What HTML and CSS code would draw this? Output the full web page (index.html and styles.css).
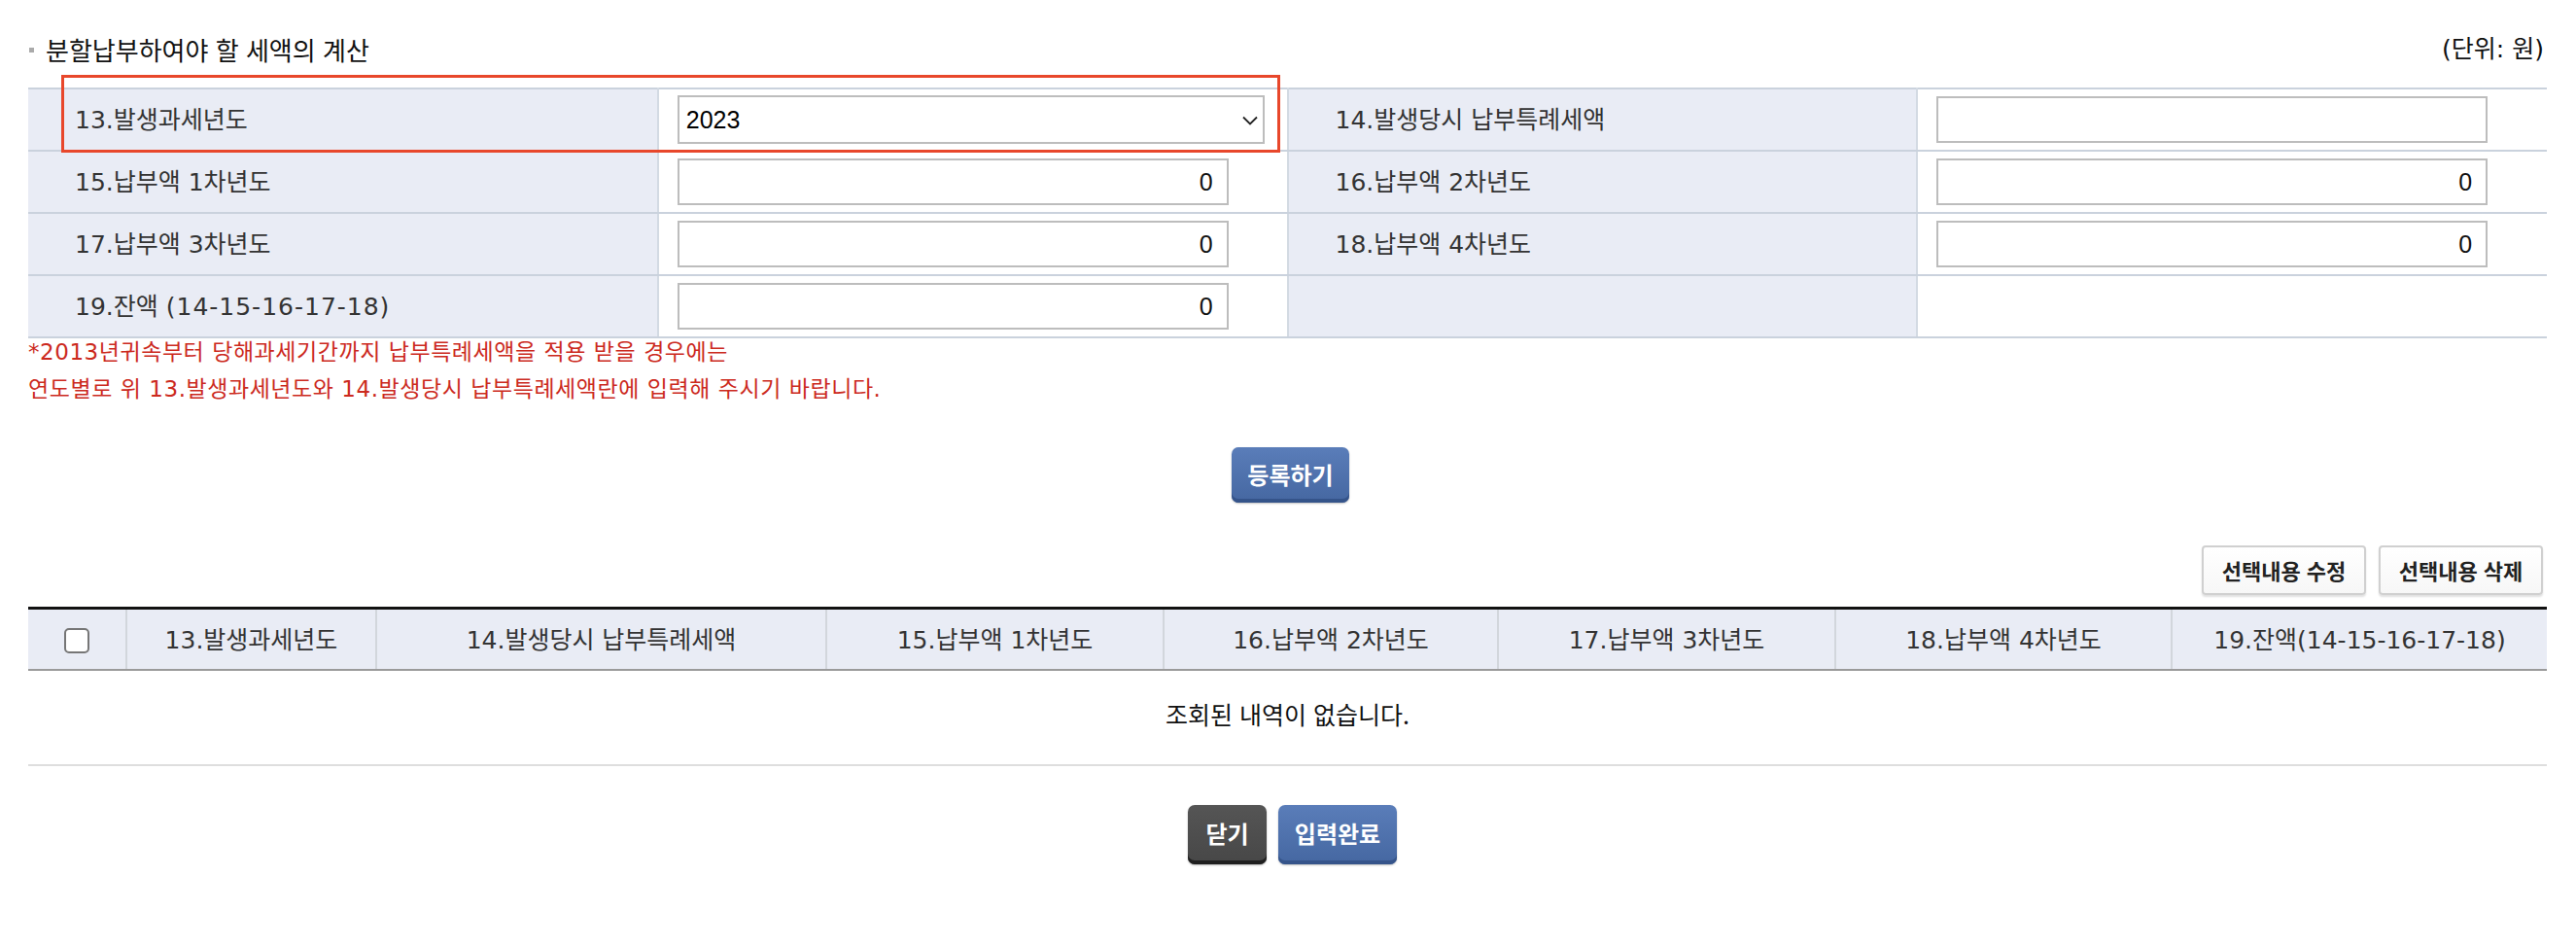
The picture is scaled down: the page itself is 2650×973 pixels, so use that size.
FILE: index.html
```html
<!DOCTYPE html>
<html lang="ko">
<head>
<meta charset="utf-8">
<title>분할납부하여야 할 세액의 계산</title>
<link rel="stylesheet" href="styles.css">
</head>
<body>
<div class="page">
  <div class="head">
    <h2 class="title"><span class="bullet"></span>분할납부하여야 할 세액의 계산</h2>
    <span class="unit">(단위: 원)</span>
  </div>

  <div class="calc">
    <div class="highlight"></div>
    <table class="form">
      <colgroup>
        <col class="c-label"><col class="c-field"><col class="c-label"><col class="c-field">
      </colgroup>
      <tr>
        <th>13.발생과세년도</th>
        <td>
          <div class="sel">
            <select><option>2023</option></select>
            <svg class="chev" width="16" height="10" viewBox="0 0 16 10"><path d="M1 1.5 L8 8.5 L15 1.5" fill="none" stroke="#222" stroke-width="1.8"/></svg>
          </div>
        </td>
        <th>14.발생당시 납부특례세액</th>
        <td><input class="inp" type="text" value=""></td>
      </tr>
      <tr>
        <th>15.납부액 1차년도</th>
        <td><input class="inp" type="text" value="0"></td>
        <th>16.납부액 2차년도</th>
        <td><input class="inp" type="text" value="0"></td>
      </tr>
      <tr>
        <th>17.납부액 3차년도</th>
        <td><input class="inp" type="text" value="0"></td>
        <th>18.납부액 4차년도</th>
        <td><input class="inp" type="text" value="0"></td>
      </tr>
      <tr>
        <th>19.잔액 <span class="nums">(14-15-16-17-18)</span></th>
        <td><input class="inp" type="text" value="0"></td>
        <th></th>
        <td></td>
      </tr>
    </table>
  </div>

  <div class="notes">
    <p>*2013년귀속부터 당해과세기간까지 납부특례세액을 적용 받을 경우에는</p>
    <p>연도별로 위 13.발생과세년도와 14.발생당시 납부특례세액란에 입력해 주시기 바랍니다.</p>
  </div>

  <div class="center reg">
    <button class="btn blue">등록하기</button>
  </div>

  <div class="tools">
    <button class="tbtn">선택내용 수정</button>
    <button class="tbtn">선택내용 삭제</button>
  </div>

  <table class="grid">
    <colgroup>
      <col class="g0"><col class="g1"><col class="g2"><col class="g3"><col class="g4"><col class="g5"><col class="g6"><col class="g7">
    </colgroup>
    <thead>
      <tr>
        <th><input class="chk" type="checkbox"></th>
        <th>13.발생과세년도</th>
        <th>14.발생당시 납부특례세액</th>
        <th>15.납부액 1차년도</th>
        <th>16.납부액 2차년도</th>
        <th>17.납부액 3차년도</th>
        <th>18.납부액 4차년도</th>
        <th>19.잔액(14-15-16-17-18)</th>
      </tr>
    </thead>
    <tbody>
      <tr><td colspan="8" class="empty">조회된 내역이 없습니다.</td></tr>
    </tbody>
  </table>

  <div class="center bottom">
    <button class="btn dark">닫기</button>
    <button class="btn blue tall">입력완료</button>
  </div>
</div>
</body>
</html>
```

FILE: styles.css
```css
* { box-sizing: border-box; }
html, body { margin: 0; padding: 0; background: #fff; }
body {
  font-family: "Noto Sans CJK KR", "Noto Sans", "Liberation Sans", sans-serif;
  color: #222;
}
.page { padding: 0 30px 40px 29px; }

.head {
  display: flex;
  justify-content: space-between;
  align-items: center;
  padding-top: 34px;
  height: 68px;
  margin-bottom: 22px;
}
.title {
  margin: 0;
  font-size: 26px;
  font-weight: normal;
  line-height: 34px;
  display: flex;
  align-items: center;
  color: #111;
}
.bullet {
  display: inline-block;
  width: 5px;
  height: 5px;
  background: #aaa;
  margin: 0 12px 0 1px;
}
.unit {
  font-family: "DejaVu Sans", "Noto Sans CJK KR", sans-serif;
  font-size: 25px;
  line-height: 34px;
  color: #111;
  margin-right: 3px;
}

.calc { position: relative; }
.highlight {
  position: absolute;
  top: -13px;
  left: 34px;
  width: 1254px;
  height: 80px;
  border: 3px solid #e8472b;
  pointer-events: none;
  z-index: 2;
}
.form {
  width: 100%;
  border-collapse: collapse;
  table-layout: fixed;
  border-top: 2px solid #cad2dd;
}
.form col.c-label, .form col.c-field { width: 25%; }
.form th, .form td {
  height: 64px;
  padding: 0;
  border-bottom: 2px solid #cad2dd;
  border-left: 2px solid #d3dae3;
  vertical-align: middle;
}
.form tr > :first-child { border-left: none; }
.form th {
  background: #e9ecf5;
  font-family: "DejaVu Sans", "Noto Sans CJK KR", sans-serif;
  font-weight: normal;
  text-align: left;
  padding: 0 0 4px 48px;
  font-size: 25px;
  color: #333;
}
.form th .nums { letter-spacing: 1px; }
.form td { padding-left: 19px; background: #fff; }

.inp {
  display: block;
  width: 567px;
  height: 48px;
  border: 2px solid #bdbdbd;
  background: #fff;
  font-family: "Liberation Sans", "Noto Sans CJK KR", sans-serif;
  font-size: 25px;
  text-align: right;
  padding: 0 14px 0 8px;
  color: #111;
  outline: none;
}
.sel { position: relative; width: 604px; height: 50px; }
.sel select {
  appearance: none;
  -webkit-appearance: none;
  width: 100%;
  height: 100%;
  border: 2px solid #bdbdbd;
  background: #fff;
  font-family: "Liberation Sans", "Noto Sans CJK KR", sans-serif;
  font-size: 25px;
  color: #000;
  padding: 0 40px 0 7px;
  border-radius: 0;
  outline: none;
}
.sel .chev { position: absolute; right: 7px; top: 21px; pointer-events: none; }

.notes {
  color: #cc2a1e;
  font-family: "DejaVu Sans", "Noto Sans CJK KR", sans-serif;
  font-size: 23px;
  letter-spacing: 0.55px;
}
.notes p { margin: 0 0 10px; line-height: 28px; }
.notes p:last-child { margin-bottom: 0; }

.center { display: flex; justify-content: center; gap: 12px; }
.reg { margin-top: 46px; padding-left: 6px; }
.btn {
  height: 57px;
  border: none;
  border-radius: 7px;
  color: #fff;
  font-family: "Noto Sans CJK KR", sans-serif;
  font-weight: bold;
  font-size: 24px;
  padding: 0 12px 3px;
  cursor: pointer;
}
.btn.blue {
  background: linear-gradient(#5a7db9, #4567a1);
  box-shadow: inset 0 -4px 0 #35548a, 0 1px 2px rgba(0,0,0,0.25);
  min-width: 121px;
}
.btn.dark {
  background: linear-gradient(#555, #474747);
  box-shadow: inset 0 -4px 0 #1f1f1f, 0 1px 2px rgba(0,0,0,0.3);
  min-width: 81px;
  height: 61px;
}
.btn.tall { height: 61px; min-width: 122px; }

.tools {
  display: flex;
  justify-content: flex-end;
  gap: 13px;
  margin-top: 44px;
  padding-right: 4px;
}
.tbtn {
  height: 51px;
  min-width: 169px;
  padding: 0 14px 2px;
  background: linear-gradient(#fff, #f7f7f7);
  border: 2px solid #d0d0d0;
  border-radius: 4px;
  box-shadow: 0 2px 2px rgba(0,0,0,0.12);
  font-family: "Noto Sans CJK KR", sans-serif;
  font-weight: bold;
  font-size: 22px;
  color: #222;
}

.grid {
  width: 100%;
  margin-top: 12px;
  border-collapse: collapse;
  table-layout: fixed;
  border-top: 3px solid #111;
}
.grid col.g0 { width: 101px; }
.grid col.g1 { width: 257px; }
.grid col.g2 { width: 463px; }
.grid col.g3 { width: 347px; }
.grid col.g4 { width: 344px; }
.grid col.g5 { width: 347px; }
.grid col.g6 { width: 346px; }
.grid col.g7 { width: 386px; }
.grid thead th {
  height: 63px;
  background: #e9ecf5;
  font-family: "DejaVu Sans", "Noto Sans CJK KR", sans-serif;
  font-weight: normal;
  font-size: 25px;
  color: #333;
  border-bottom: 2px solid #9a9a9a;
  border-left: 2px solid #d2d6dc;
  padding: 0 0 2px;
  text-align: center;
}
.grid thead th:first-child { border-left: none; }
.chk {
  appearance: none;
  -webkit-appearance: none;
  width: 26px;
  height: 26px;
  margin: 4px 0 0;
  border: 2px solid #767676;
  border-radius: 5px;
  background: #fff;
  vertical-align: middle;
}
.grid .empty {
  height: 98px;
  padding: 0 0 8px;
  text-align: center;
  font-size: 25px;
  color: #111;
  border-bottom: 2px solid #dedede;
}
.bottom { margin-top: 40px; padding-left: 10px; }
```
